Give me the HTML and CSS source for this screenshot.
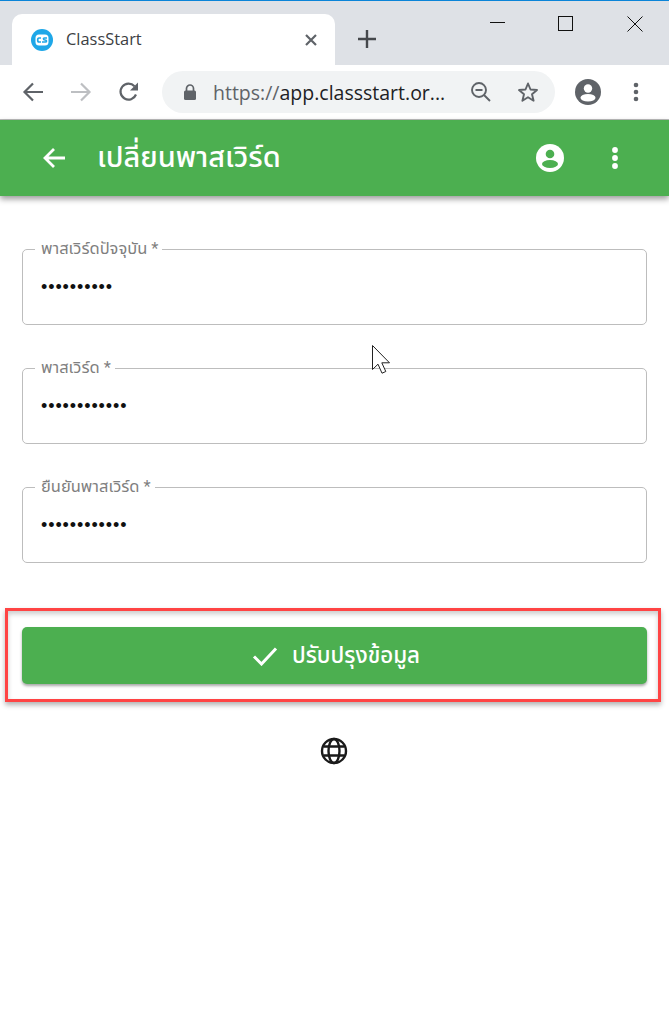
FILE: index.html
```html
<!DOCTYPE html>
<html lang="th">
<head>
<meta charset="utf-8">
<title>ClassStart</title>
<link rel="stylesheet" href="styles.css">
</head>
<body>
<header class="chrome">
  <div class="tabstrip">
    <div class="tab">
      <svg class="favicon" width="22" height="22" viewBox="0 0 22 22"><circle cx="11" cy="11" r="11" fill="#1ea7e8"/><rect x="4.500" y="5.500" width="13" height="11" rx="3.500" fill="#fff"/><path d="M10 9H8q-1.300 0-1.300 2T8 13h2M16 9h-2.500q-1.200 0-1 1 .1 1 1.500 1 1.500 0 1.500 1t-1.200 1H11" fill="none" stroke="#1ea7e8" stroke-width="1.700"/></svg>
      <span class="tab-title">ClassStart</span>
      <svg class="tab-close" width="14" height="14" viewBox="0 0 14 14"><path d="M2 2l10 10M12 2L2 12" stroke="#5f6368" stroke-width="2.200"/></svg>
    </div>
    <svg class="new-tab" width="18" height="18" viewBox="0 0 18 18"><path d="M9 0v18M0 9h18" stroke="#45484c" stroke-width="2.400"/></svg>
    <div class="win-controls">
      <svg width="16" height="16" viewBox="0 0 16 16"><path d="M0 6.500h15" stroke="#111" stroke-width="1"/></svg>
      <svg width="16" height="16" viewBox="0 0 16 16"><rect x=".5" y=".5" width="14" height="14" fill="none" stroke="#111"/></svg>
      <svg width="16" height="16" viewBox="0 0 16 16"><path d="M.5.500l15 15M15.500.500l-15 15" stroke="#111" stroke-width="1"/></svg>
    </div>
  </div>
  <div class="toolbar">
    <svg class="nav" width="24" height="24" viewBox="0 0 24 24"><path d="M22 12H4M12 3.500L3.500 12l8.500 8.500" fill="none" stroke="#5f6368" stroke-width="2.200"/></svg>
    <svg class="nav" width="24" height="24" viewBox="0 0 24 24"><path d="M2 12h18M12 3.500l8.500 8.500-8.500 8.500" fill="none" stroke="#bdbfc2" stroke-width="2.200"/></svg>
    <svg class="nav" width="24" height="24" viewBox="0 0 24 24"><path d="M19 14.500A8 8 0 1 1 17.500 6.300" fill="none" stroke="#5f6368" stroke-width="2.200"/><path d="M21 2.500v8h-8z" fill="#5f6368"/></svg>
    <div class="omnibox">
      <svg class="lock" width="14" height="16" viewBox="0 0 14 16"><path d="M3.500 7V4.500a3.500 3.500 0 0 1 7 0V7" fill="none" stroke="#5f6368" stroke-width="1.700"/><rect x="1" y="6.500" width="12" height="9.500" rx="1.500" fill="#5f6368"/></svg>
      <span class="url"><span class="scheme">https://</span>app.classstart.or...</span>
      <svg class="zoom-out" width="22" height="22" viewBox="0 0 22 22"><circle cx="9" cy="9" r="7" fill="none" stroke="#5f6368" stroke-width="1.900"/><path d="M5.500 9h7M14 14l6 6" stroke="#5f6368" stroke-width="1.900"/></svg>
      <svg class="star" width="22" height="22" viewBox="0 0 22 22"><path d="M11 2.500l2.500 6 6.500.5-5 4.300 1.600 6.400L11 16.300l-5.600 3.400L7 13.300 2 9l6.500-.5z" fill="none" stroke="#5f6368" stroke-width="1.900" stroke-linejoin="round"/></svg>
    </div>
    <svg class="avatar" width="26" height="26" viewBox="0 0 26 26"><circle cx="13" cy="13" r="13" fill="#5f6368"/><circle cx="13" cy="9.500" r="4.200" fill="#fff"/><ellipse cx="13" cy="18.800" rx="7.500" ry="3.800" fill="#fff"/></svg>
    <svg class="menu" width="6" height="20" viewBox="0 0 6 20"><circle cx="3" cy="3" r="2.300" fill="#5f6368"/><circle cx="3" cy="10" r="2.300" fill="#5f6368"/><circle cx="3" cy="17" r="2.300" fill="#5f6368"/></svg>
  </div>
</header>

<div class="appbar">
  <svg class="back" width="24" height="24" viewBox="0 0 24 24"><path d="M23 12H3M12 3l-9 9 9 9" fill="none" stroke="#fff" stroke-width="2.800"/></svg>
  <h1 class="title">เปลี่ยนพาสเวิร์ด</h1>
  <svg class="user" width="28" height="28" viewBox="0 0 28 28"><circle cx="14" cy="14" r="14" fill="#fff"/><circle cx="14" cy="10" r="4.300" fill="#4caf50"/><ellipse cx="14" cy="20" rx="8" ry="4" fill="#4caf50"/></svg>
  <svg class="more" width="8" height="24" viewBox="0 0 8 24"><circle cx="4" cy="4" r="2.900" fill="#fff"/><circle cx="4" cy="12" r="2.900" fill="#fff"/><circle cx="4" cy="20" r="2.900" fill="#fff"/></svg>
</div>

<main class="content">
  <form class="form">
    <fieldset class="field">
      <legend class="label">พาสเวิร์ดปัจจุบัน *</legend>
      <div class="dots">••••••••••</div>
    </fieldset>
    <fieldset class="field">
      <legend class="label">พาสเวิร์ด *</legend>
      <div class="dots">••••••••••••</div>
    </fieldset>
    <fieldset class="field">
      <legend class="label">ยืนยันพาสเวิร์ด *</legend>
      <div class="dots">••••••••••••</div>
    </fieldset>
  </form>

  <div class="highlight">
    <div class="submit">
      <svg width="26" height="20" viewBox="0 0 26 20"><path d="M2 10.500l7.500 7.500L24 2.500" fill="none" stroke="#fff" stroke-width="3"/></svg>
      <span>ปรับปรุงข้อมูล</span>
    </div>
  </div>

  <div class="lang">
    <svg width="28" height="28" viewBox="0 0 28 28" fill="none" stroke="#1a1a1a" stroke-width="2.400"><circle cx="14" cy="14" r="12"/><ellipse cx="14" cy="14" rx="5.500" ry="12"/><path d="M3.500 9.500h21M3.500 18.500h21"/></svg>
  </div>
</main>

<svg class="cursor" width="20" height="29" viewBox="0 0 20 29"><path d="M.5.500v24l5.500-5.300 4 9 3.800-1.700-4-8.700h7.700z" fill="#fff" stroke="#222" stroke-width="1"/></svg>
</body>
</html>
```
FILE: styles.css
```css
* { box-sizing: border-box; }
html, body { margin: 0; padding: 0; }
body {
  position: relative;
  width: 669px;
  height: 1019px;
  overflow: hidden;
  background: #fff;
  font-family: "Roboto", "Noto Sans", "Noto Sans Thai", "Liberation Sans", sans-serif;
}
svg { display: block; flex: none; }

.chrome { height: 120px; border-bottom: 1px solid #bcbcbc; }
.tabstrip {
  height: 65px;
  display: flex;
  align-items: flex-start;
  padding: 13px 0 0 12px;
  border-top: 1px solid #0a84d8;
  background: #dee1e6;
}
.tab {
  width: 323px;
  height: 51px;
  display: flex;
  align-items: center;
  padding: 0 17px 0 19px;
  background: #fff;
  border-radius: 10px 10px 0 0;
}
.tab-title {
  margin-left: 13px;
  padding-bottom: 2px;
  flex: 1;
  font: 16.4px "Open Sans", sans-serif;
  color: #3c4043;
}
.new-tab { margin: 16px 0 0 23px; }
.win-controls {
  display: flex;
  gap: 53px;
  margin: 2px 0 0 auto;
  padding-right: 26px;
}
.win-controls svg:first-child { margin-right: -1px; }
.toolbar {
  height: 54px;
  display: flex;
  align-items: center;
  padding: 0 0 0 21px;
}
.nav { margin-right: 24px; }
.nav:nth-child(3) { margin-right: 21px; }
.omnibox {
  width: 393px;
  height: 42px;
  display: flex;
  align-items: center;
  padding-left: 21px;
  background: #f1f3f4;
  border-radius: 21px;
}
.url {
  margin-left: 16px;
  width: 250px;
  font: 19.5px "Open Sans", sans-serif;
  color: #202124;
  white-space: nowrap;
}
.scheme { color: #5f6368; }
.zoom-out { margin-left: 7px; }
.star { margin-left: 25px; }
.avatar { margin-left: 20px; }
.menu { margin-left: 32px; }

.appbar {
  position: relative;
  height: 76px;
  display: flex;
  align-items: center;
  padding-left: 42px;
  background: #4caf50;
  box-shadow: 0 3px 6px rgba(0,0,0,.4);
}
.title {
  margin: 0 0 0 31px;
  flex: 1;
  font-size: 29px;
  font-weight: 500;
  color: #fff;
}
.more { margin: 0 50px 0 47px; }

.content { padding-top: 45px; }
.form {
  display: flex;
  flex-direction: column;
  gap: 35px;
  padding: 0 22px;
}
.field {
  height: 84px;
  margin: 0;
  padding: 0 0 0 18px;
  border: 1px solid #bdbdbd;
  border-radius: 5px;
}
.label {
  padding: 0 4px 0 6px;
  margin-left: -6px;
  font-size: 16.5px;
  line-height: 16px;
  color: #7f7f7f;
}
.dots {
  margin-top: 18px;
  height: 24px;
  font: 18px/24px "Liberation Sans", sans-serif;
  letter-spacing: .9px;
  color: #111;
}
.highlight {
  width: 656px;
  height: 94px;
  margin: 45px 0 0 5px;
  padding: 16px 11px 0 14px;
  border: 3px solid #ff4444;
  box-shadow: 0 3px 5px rgba(0,0,0,.3), inset 0 3px 5px rgba(0,0,0,.2);
}
.submit {
  height: 57px;
  display: flex;
  align-items: center;
  justify-content: center;
  gap: 14px;
  padding-left: 3px;
  background: #4caf50;
  border-radius: 5px;
  box-shadow: 0 2px 3px rgba(0,0,0,.35);
  font-size: 22.4px;
  font-weight: 500;
  color: #fff;
}
.lang {
  display: flex;
  justify-content: center;
  margin-top: 35px;
  padding-right: 2px;
}
.cursor { position: absolute; left: 372px; top: 345px; }
```
